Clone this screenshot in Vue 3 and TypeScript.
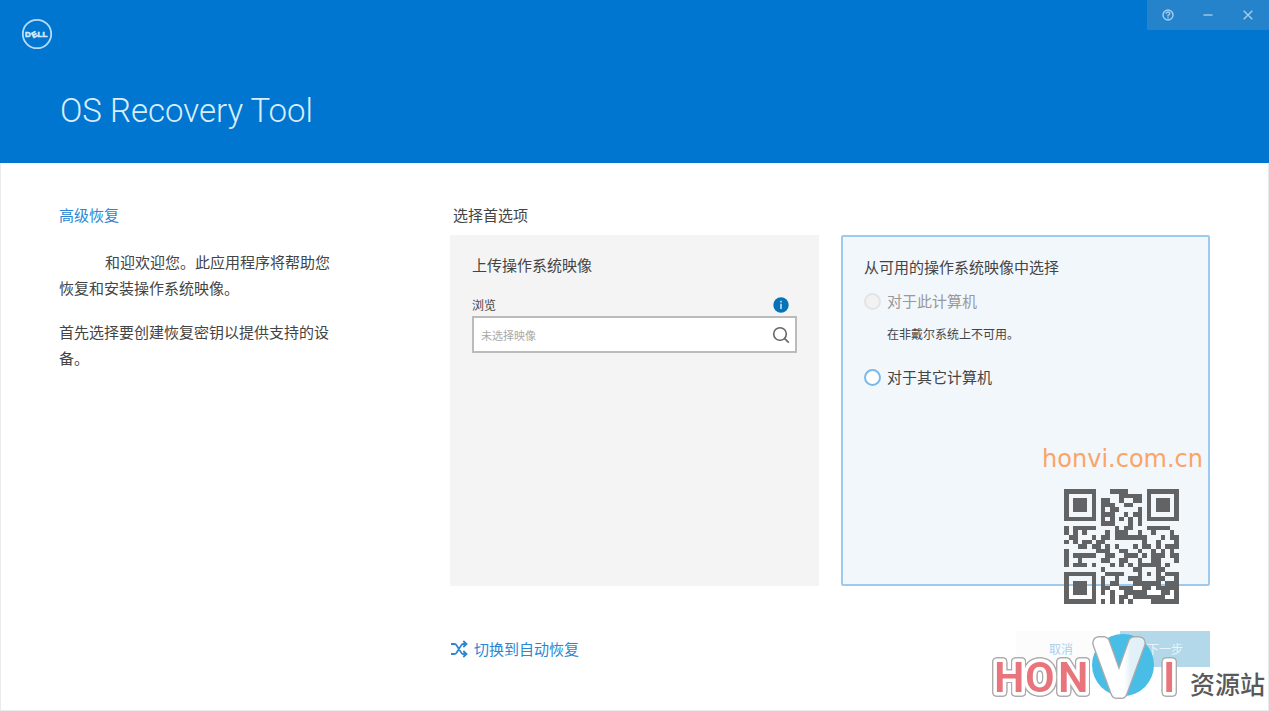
<script setup lang="ts">
import { ref } from 'vue'

const source = ref<string>('')
const imagePath = ref<string>('')

const SIZE = 25
const DATA_WORDS = 28
const ECC_WORDS = 16
const FORMAT_BITS = 0b101111001111100

function multiply(a: number, b: number): number {
  let z = 0
  for (let i = 7; i >= 0; i--) {
    z = (z << 1) ^ ((z >>> 7) * 0x11d)
    z ^= ((b >>> i) & 1) * a
  }
  return z & 0xff
}

function codewords(text: string): number[] {
  const bits: number[] = []
  const push = (value: number, length: number) => {
    for (let i = length - 1; i >= 0; i--) bits.push((value >>> i) & 1)
  }
  push(4, 4)
  push(text.length, 8)
  for (const ch of text) push(ch.charCodeAt(0), 8)
  push(0, 4)
  while (bits.length % 8) bits.push(0)
  const data: number[] = []
  for (let i = 0; i < bits.length; i += 8) {
    data.push(parseInt(bits.slice(i, i + 8).join(''), 2))
  }
  for (let pad = 0xec; data.length < DATA_WORDS; pad ^= 0xec ^ 0x11) data.push(pad)

  const divisor: number[] = new Array(ECC_WORDS).fill(0)
  divisor[ECC_WORDS - 1] = 1
  let root = 1
  for (let i = 0; i < ECC_WORDS; i++) {
    for (let j = 0; j < ECC_WORDS; j++) {
      divisor[j] = multiply(divisor[j], root)
      if (j + 1 < ECC_WORDS) divisor[j] ^= divisor[j + 1]
    }
    root = multiply(root, 2)
  }
  const remainder: number[] = new Array(ECC_WORDS).fill(0)
  for (const word of data) {
    const factor = word ^ remainder.shift()!
    remainder.push(0)
    divisor.forEach((d, i) => { remainder[i] ^= multiply(d, factor) })
  }
  return data.concat(remainder)
}

function qrPath(text: string): string {
  const grid: (boolean | null)[][] = Array.from({ length: SIZE }, () => new Array(SIZE).fill(null))
  const square = (cx: number, cy: number, reach: number) => {
    for (let dy = -reach; dy <= reach; dy++) {
      for (let dx = -reach; dx <= reach; dx++) {
        const x = cx + dx
        const y = cy + dy
        const ring = Math.max(Math.abs(dx), Math.abs(dy))
        if (x < 0 || y < 0 || x >= SIZE || y >= SIZE) continue
        grid[y][x] = reach === 2 ? ring !== 1 : ring !== 2 && ring !== 4
      }
    }
  }
  for (let i = 0; i < SIZE; i++) {
    grid[6][i] = i % 2 === 0
    grid[i][6] = i % 2 === 0
  }
  square(3, 3, 4)
  square(SIZE - 4, 3, 4)
  square(3, SIZE - 4, 4)
  square(18, 18, 2)

  const format = (i: number) => ((FORMAT_BITS >>> i) & 1) === 1
  for (let i = 0; i <= 5; i++) grid[i][8] = format(i)
  grid[7][8] = format(6)
  grid[8][8] = format(7)
  grid[8][7] = format(8)
  for (let i = 9; i < 15; i++) grid[8][14 - i] = format(i)
  for (let i = 0; i < 8; i++) grid[8][SIZE - 1 - i] = format(i)
  for (let i = 8; i < 15; i++) grid[SIZE - 15 + i][8] = format(i)
  grid[SIZE - 8][8] = true

  const words = codewords(text)
  let index = 0
  for (let right = SIZE - 1; right >= 1; right -= 2) {
    if (right === 6) right = 5
    const upward = ((right + 1) & 2) === 0
    for (let step = 0; step < SIZE; step++) {
      const y = upward ? SIZE - 1 - step : step
      for (const x of [right, right - 1]) {
        if (grid[y][x] !== null) continue
        const bit = ((words[index >>> 3] ?? 0) >>> (7 - (index & 7))) & 1
        grid[y][x] = (bit === 1) !== (x % 3 === 0)
        index++
      }
    }
  }
  return grid
    .flatMap((row, y) => row.map((dark, x) => (dark ? `M${x} ${y}h1v1h-1z` : '')))
    .join('')
}

const qr = qrPath('https://honvi.com.cn')
</script>

<template>
  <div class="window">
    <header class="banner">
      <div class="topbar">
        <svg class="dell" viewBox="0 0 32 32" role="img" aria-label="Dell">
          <circle cx="16" cy="16" r="14.2" fill="none" stroke="#b5dbf8" stroke-width="1.8" />
          <g class="dell-letters">
            <text x="4" y="19">D</text>
            <text x="10.500" y="19.500" transform="rotate(-28 13 16.5)">E</text>
            <text x="16.500" y="19">LL</text>
          </g>
        </svg>
        <div class="controls">
          <button type="button" aria-label="帮助">
            <svg viewBox="0 0 12 12"><circle cx="6" cy="6" r="5" /><path d="M4.2 4.8V4.2Q4.4 3 6 3T7.8 4.5Q7.8 5.5 6 6.3V7.4M6 8.3V9.5" /></svg>
          </button>
          <button type="button" aria-label="最小化">
            <svg viewBox="0 0 12 12"><path d="M1.5 6H10.5" /></svg>
          </button>
          <button type="button" aria-label="关闭">
            <svg viewBox="0 0 12 12"><path d="M1.7 1.7L10.3 10.3M10.3 1.7L1.7 10.3" /></svg>
          </button>
        </div>
      </div>
      <h1>OS Recovery Tool</h1>
    </header>

    <main class="content">
      <section class="intro">
        <h2>高级恢复</h2>
        <p class="welcome">和迎欢迎您。此应用程序将帮助您恢复和安装操作系统映像。</p>
        <p>首先选择要创建恢复密钥以提供支持的设备。</p>
      </section>

      <section class="options">
        <h2>选择首选项</h2>
        <div class="cards">
          <div class="card upload">
            <h3>上传操作系统映像</h3>
            <div class="label-row">
              <label for="image">浏览</label>
              <svg class="info" viewBox="0 0 16 16" role="img" aria-label="信息">
                <circle cx="8" cy="8" r="7.7" fill="#0672b8" />
                <path d="M8 3.8V5.4M8 6.8V12" stroke="#b9dcf2" stroke-width="1.7" />
              </svg>
            </div>
            <div class="field">
              <input id="image" v-model="imagePath" type="text" placeholder="未选择映像" />
              <button type="button" aria-label="浏览映像">
                <svg viewBox="0 0 18 18" fill="none" stroke="#666" stroke-width="1.6"><circle cx="8" cy="8" r="6.3" /><path d="M12.4 12.4L16.8 16.6" /></svg>
              </button>
            </div>
          </div>
          <div class="card choose">
            <h3>从可用的操作系统映像中选择</h3>
            <label class="choice disabled"><input v-model="source" type="radio" name="source" value="this" disabled />对于此计算机</label>
            <p class="note">在非戴尔系统上不可用。</p>
            <label class="choice"><input v-model="source" type="radio" name="source" value="other" />对于其它计算机</label>
          </div>
        </div>
        <footer class="actions">
          <a href="#" class="switch">
            <svg viewBox="0 0 18 18" fill="none" stroke="#2b87d3" stroke-width="1.8"><path d="M1 4H4.2Q5.5 4 6.4 5L11.2 12.6Q12 14 13.2 14H16M1 14H4.2Q5.5 14 6.4 13L11.2 5.4Q12 4 13.2 4H16M13.3 1L16.5 4L13.3 7M13.3 11L16.5 14L13.3 17" /></svg>
            切换到自动恢复
          </a>
          <button type="button" class="cancel">取消</button>
          <button type="button" class="next" disabled>下一步</button>
        </footer>
      </section>
    </main>

    <span class="site">honvi.com.cn</span>
    <svg class="qr" viewBox="0 0 25 25" role="img" aria-label="honvi.com.cn" shape-rendering="crispEdges"><path :d="qr" fill="#626365" /></svg>
    <div class="brand">
      <svg viewBox="0 0 186 90" role="img" aria-label="HONVI">
        <defs>
          <linearGradient id="arm" x1="0" x2="1"><stop offset=".62" stop-color="#fff" /><stop offset=".78" stop-color="#e2f0f7" /></linearGradient>
        </defs>
        <circle cx="131" cy="44" r="31" fill="#48bee7" />
        <text class="letters" x="2 33 66" y="71">HON</text>
        <text class="letters" x="171" y="71">I</text>
        <text class="vee" x="127" y="71">V</text>
      </svg>
      <span>资源站</span>
    </div>
  </div>
</template>

<style>
body {
  margin: 0;
}
</style>

<style scoped>
.window {
  position: relative;
  display: flex;
  flex-direction: column;
  box-sizing: border-box;
  min-height: 100vh;
  background: #fff;
  color: #444;
  font: 15px/22px "Noto Sans CJK SC", sans-serif;
  box-shadow: inset 0 0 0 1px #e9eaec;
}
h1, h2, h3, p {
  margin: 0;
  font-size: 15px;
  font-weight: 400;
}
button {
  padding: 0;
  border: 0;
  background: none;
  font: inherit;
}
.banner {
  box-sizing: border-box;
  min-height: 163px;
  background: #0076d0;
}
.topbar {
  display: flex;
  justify-content: space-between;
  align-items: flex-start;
}
.dell {
  width: 32px;
  height: 32px;
  margin: 18px 0 0 21px;
}
.dell-letters {
  fill: #d5ecfc;
  stroke: #d5ecfc;
  stroke-width: 0.6;
  font: 700 8px "Liberation Sans", sans-serif;
}
.controls {
  display: flex;
  padding: 0 1px;
  background: #2583cc;
}
.controls button {
  display: grid;
  place-items: center;
  width: 40px;
  height: 30px;
}
.controls svg {
  width: 12px;
  height: 12px;
  fill: none;
  stroke: #a5cdec;
  stroke-width: 1.4;
}
h1 {
  margin: 41px 60px 0;
  color: #d9edfc;
  font: 300 33px/40px Roboto, sans-serif;
}
.content {
  display: grid;
  flex: 1;
  grid-template-columns: 391px 1fr;
  padding: 41px 59px 44px;
}
.intro {
  max-width: 276px;
  line-height: 26px;
}
.intro h2 {
  margin-bottom: 23px;
  color: #2b87d3;
  line-height: 22px;
}
.intro p + p {
  margin-top: 18px;
}
.welcome {
  text-indent: 46px;
}
.options {
  display: flex;
  flex-direction: column;
}
.options h2 {
  margin: 0 3px 9px;
}
.cards {
  display: grid;
  flex: 1;
  grid-template-columns: 1fr 1fr;
  gap: 22px;
}
.card {
  padding: 19px 22px;
}
.upload {
  background: #f4f4f4;
}
.choose {
  border: 2px solid #9dcbee;
  border-radius: 2px;
  padding: 19px 21px;
  background: #f2f7fc;
}
.label-row {
  display: flex;
  justify-content: space-between;
  align-items: center;
  height: 22px;
  margin-top: 18px;
  padding-right: 8px;
  font-size: 12px;
}
.info {
  width: 16px;
  height: 16px;
}
.field {
  display: flex;
  align-items: center;
  box-sizing: border-box;
  height: 37px;
  border: 2px solid #bbb;
  background: #fff;
}
.field input {
  flex: 1;
  min-width: 0;
  border: 0;
  padding: 0 7px;
  outline: 0;
  background: none;
  color: #444;
  font: 11px "Noto Sans CJK SC", sans-serif;
}
.field input::placeholder {
  color: #aaa;
  opacity: 1;
}
.field button {
  width: 18px;
  height: 18px;
  margin-right: 5px;
}
.field svg {
  display: block;
}
.choice {
  display: flex;
  align-items: center;
  gap: 6px;
  margin-top: 12px;
}
.choice input {
  appearance: none;
  box-sizing: border-box;
  width: 17px;
  height: 17px;
  margin: 0;
  border: 2px solid #7db9e8;
  border-radius: 50%;
  background: #fff;
}
.choice.disabled {
  color: #999;
}
.choice.disabled input {
  border-color: #e3e4e6;
  background: #f2f2f2;
}
.note {
  margin: 11px 0 21px 23px;
  font-size: 12px;
}
.actions {
  display: flex;
  align-items: center;
  gap: 14px;
  margin-top: 45px;
}
.switch {
  display: flex;
  align-items: center;
  gap: 6px;
  margin-right: auto;
  color: #2b87d3;
  text-decoration: none;
}
.switch svg {
  width: 18px;
  height: 18px;
}
.actions button {
  width: 90px;
  height: 36px;
  font-size: 12px;
}
.cancel {
  background: #fcfcfd;
  color: #a9d0ee;
}
.next {
  background: #b2d8ea;
  color: #e8f4fa;
}
.site {
  position: absolute;
  right: 66px;
  bottom: 238px;
  color: #fba468;
  font: 24px/28px "DejaVu Sans", sans-serif;
}
.qr {
  position: absolute;
  right: 90px;
  bottom: 107px;
  width: 115px;
  height: 115px;
}
.brand {
  position: absolute;
  right: 4px;
  bottom: 0;
  display: flex;
  align-items: flex-end;
  gap: 12px;
}
.brand svg {
  width: 186px;
  height: 90px;
  overflow: visible;
}
.brand span {
  margin-bottom: 11px;
  color: #58595b;
  font-size: 25px;
  font-weight: 500;
  line-height: 34px;
}
.letters,
.vee {
  stroke: #fff;
  stroke-linejoin: round;
  paint-order: stroke;
  filter: drop-shadow(1px 0 0 #aaa) drop-shadow(-1px 0 0 #aaa) drop-shadow(0 1px 0 #aaa) drop-shadow(0 -1px 0 #aaa);
}
.letters {
  fill: #e9757c;
  stroke-width: 7;
  font: 600 43px Roboto, sans-serif;
}
.vee {
  fill: url(#arm);
  stroke: url(#arm);
  stroke-width: 11;
  font: 300 68px Roboto, sans-serif;
  text-anchor: middle;
}
</style>
